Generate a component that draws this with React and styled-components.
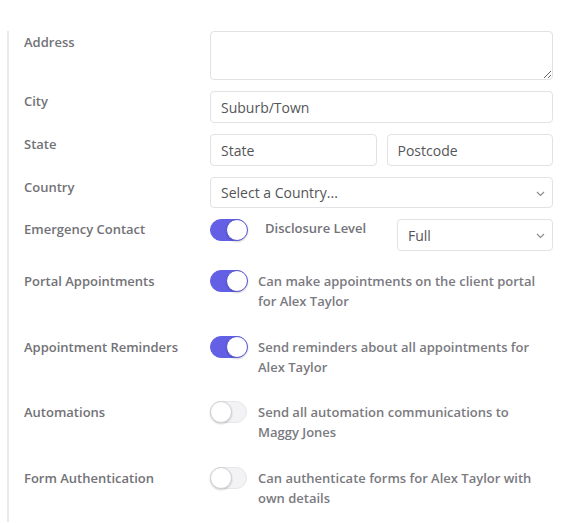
import React, { useState } from "react";
import styled, { createGlobalStyle } from "styled-components";

const GlobalStyle = createGlobalStyle`
  html, body {
    margin: 0;
    padding: 0;
    background: #ffffff;
  }
  body {
    font-family: "Open Sans", "Liberation Sans", Arial, sans-serif;
    -webkit-font-smoothing: antialiased;
  }
  * { box-sizing: border-box; }
`;

const Panel = styled.section`
  margin: 31px 0 0 7px;
  border-left: 2px solid #e9e9ec;
  padding: 0 17px 14px 15px;
`;

const Row = styled.div`
  display: grid;
  grid-template-columns: 186px 1fr;
  align-items: start;
  margin-bottom: ${(p) => p.$gap ?? 11}px;
`;

const Label = styled.div`
  font-size: 13px;
  font-weight: 600;
  line-height: 20px;
  color: #727277;
  padding-top: ${(p) => p.$offset ?? 0}px;
`;

const fieldBase = `
  width: 100%;
  border: 1px solid #e2e2e6;
  border-radius: 4px;
  background: #fff;
  font-family: "Open Sans", "Liberation Sans", Arial, sans-serif;
  font-size: 14px;
  color: #555559;
  padding: 0 10px;
  outline: none;
`;

const TextArea = styled.textarea`
  ${fieldBase}
  display: block;
  height: 49px;
  padding: 6px 10px;
  resize: vertical;
`;

const Input = styled.input`
  ${fieldBase}
  display: block;
  height: 32px;
  &::placeholder { color: #555559; opacity: 1; }
`;

const Pair = styled.div`
  display: grid;
  grid-template-columns: 1fr 1fr;
  gap: 10px;
`;

const SelectWrap = styled.div`
  position: relative;
  width: ${(p) => p.$width || "100%"};
  flex: ${(p) => (p.$width ? `0 0 ${p.$width}` : "1 1 auto")};
  margin-left: ${(p) => (p.$push ? "auto" : "0")};
`;

const Select = styled.select`
  ${fieldBase}
  display: block;
  height: ${(p) => p.$h || 31}px;
  appearance: none;
  -webkit-appearance: none;
  padding-right: 28px;
`;

const Chevron = styled.svg`
  position: absolute;
  right: 8px;
  top: 50%;
  width: 9px;
  height: 6px;
  margin-top: -2px;
  pointer-events: none;
`;

const Controls = styled.div`
  display: flex;
  align-items: flex-start;
`;

const Track = styled.button`
  position: relative;
  flex: 0 0 37px;
  width: 37px;
  height: 22px;
  padding: 0;
  border: 1px solid ${(p) => (p.$on ? "#6360e6" : "#e6e6ea")};
  border-radius: 11px;
  background: ${(p) => (p.$on ? "#6360e6" : "#f3f3f5")};
  cursor: pointer;
`;

const Knob = styled.span`
  position: absolute;
  top: -1px;
  left: ${(p) => (p.$on ? "15px" : "-1px")};
  width: 22px;
  height: 22px;
  border-radius: 50%;
  background: #fff;
  border: 1px solid ${(p) => (p.$on ? "#5653d4" : "#d2d2d6")};
  box-shadow: 0 1px 2px rgba(0, 0, 0, 0.18);
`;

const Description = styled.div`
  margin-left: 11px;
  padding-top: 1px;
  font-size: 13px;
  font-weight: 600;
  line-height: 20px;
  color: #7a7a7f;
  max-width: 290px;
`;

const InlineLabel = styled.span`
  margin-left: 18px;
  font-size: 13px;
  font-weight: 600;
  line-height: 20px;
  color: #727277;
  margin-top: -1px;
`;

function Switch({ on, onToggle }) {
  return (
    <Track type="button" $on={on} onClick={onToggle} aria-pressed={on}>
      <Knob $on={on} />
    </Track>
  );
}

function Dropdown({ options, width, push, height }) {
  return (
    <SelectWrap $width={width} $push={push}>
      <Select $h={height} defaultValue={options[0]}>
        {options.map((o) => (
          <option key={o}>{o}</option>
        ))}
      </Select>
      <Chevron viewBox="0 0 9 6">
        <path d="M1 1l3.5 3.5L8 1" fill="none" stroke="#8a8a90" strokeWidth="1.1" />
      </Chevron>
    </SelectWrap>
  );
}

const toggleRows = [
  {
    key: "portal",
    label: "Portal Appointments",
    text: "Can make appointments on the client portal for Alex Taylor",
    on: true,
  },
  {
    key: "reminders",
    label: "Appointment Reminders",
    text: "Send reminders about all appointments for Alex Taylor",
    on: true,
  },
  {
    key: "automations",
    label: "Automations",
    text: "Send all automation communications to Maggy Jones",
    on: false,
  },
  {
    key: "formauth",
    label: "Form Authentication",
    text: "Can authenticate forms for Alex Taylor with own details",
    on: false,
  },
];

export default function App() {
  const [emergency, setEmergency] = useState(true);
  const [flags, setFlags] = useState(
    Object.fromEntries(toggleRows.map((r) => [r.key, r.on]))
  );

  return (
    <>
      <GlobalStyle />
      <Panel>
        <Row>
          <Label $offset={1}>Address</Label>
          <TextArea />
        </Row>
        <Row>
          <Label>City</Label>
          <Input placeholder="Suburb/Town" />
        </Row>
        <Row>
          <Label>State</Label>
          <Pair>
            <Input placeholder="State" />
            <Input placeholder="Postcode" />
          </Pair>
        </Row>
        <Row>
          <Label>Country</Label>
          <Dropdown options={["Select a Country..."]} />
        </Row>
        <Row $gap={19}>
          <Label>Emergency Contact</Label>
          <Controls>
            <Switch on={emergency} onToggle={() => setEmergency(!emergency)} />
            <InlineLabel>Disclosure Level</InlineLabel>
            <Dropdown options={["Full", "Partial", "None"]} width="156px" push height={32} />
          </Controls>
        </Row>
        {toggleRows.map((r, i) => (
          <Row key={r.key} $gap={i === toggleRows.length - 1 ? 0 : 24.5}>
            <Label $offset={1}>{r.label}</Label>
            <Controls>
              <Switch
                on={flags[r.key]}
                onToggle={() => setFlags({ ...flags, [r.key]: !flags[r.key] })}
              />
              <Description>{r.text}</Description>
            </Controls>
          </Row>
        ))}
      </Panel>
    </>
  );
}
